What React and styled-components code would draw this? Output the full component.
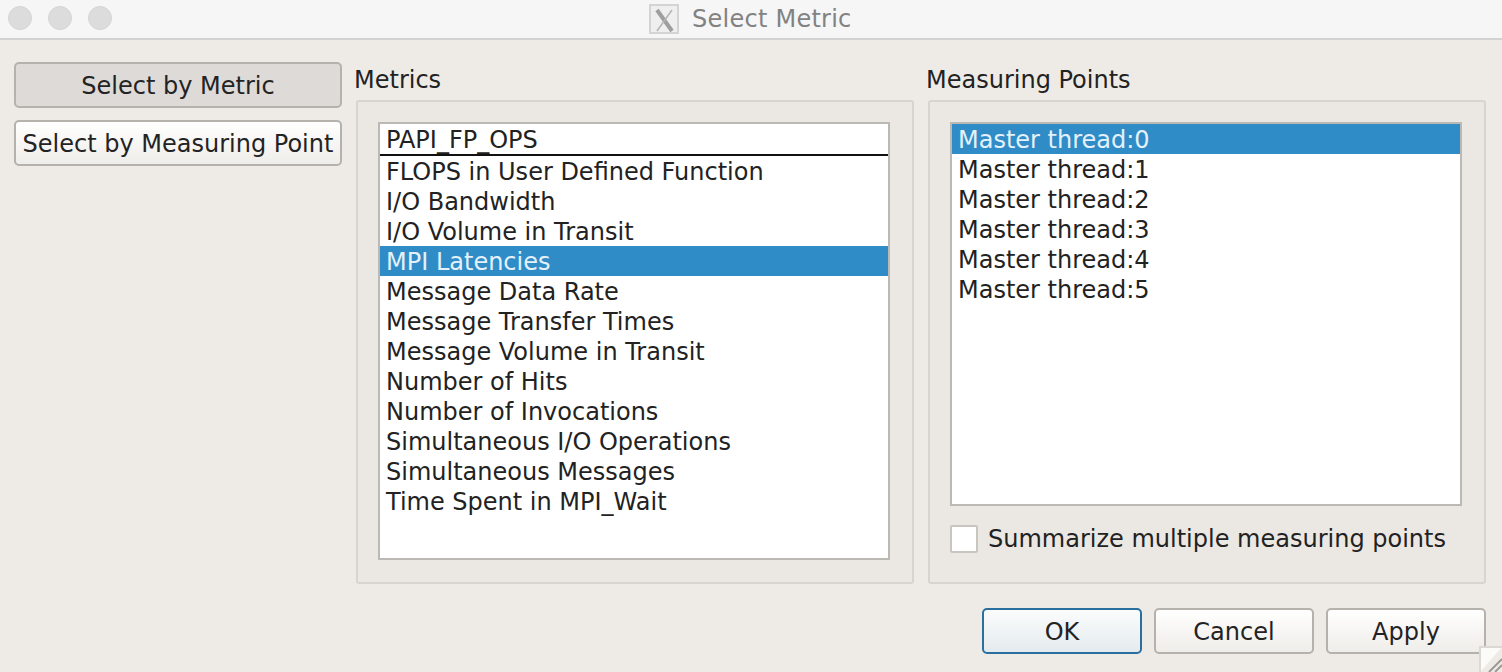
import React from "react";
import styled, { createGlobalStyle } from "styled-components";

const GlobalStyle = createGlobalStyle`
html, body { margin: 0; padding: 0; background: #eeebe7; }
body { font-family: "DejaVu Sans", sans-serif; font-size: 24px; color: #222; overflow: hidden; }
`;

const Window = styled.div`
width: 1502px;
height: 672px;
display: flex;
flex-direction: column;
position: relative;
overflow: hidden;
`;

const TitleBar = styled.div`
height: 38px;
box-sizing: content-box;
flex: none;
display: flex;
align-items: center;
position: relative;
background: #f6f6f6;
border-bottom: 2px solid #d4d2d0;
`;

const Lights = styled.div`
display: flex;
gap: 16px;
padding-left: 8px;
padding-bottom: 2px;
`;

const Light = styled.span`
width: 24px;
height: 24px;
border-radius: 50%;
background: #dcdcdc;
border: 1px solid #d4d4d4;
box-sizing: border-box;
`;

const WindowName = styled.div`
position: absolute;
left: 649px;
top: 3px;
display: flex;
align-items: center;
gap: 13px;
color: #828282;
font-size: 24px;
letter-spacing: 0.25px;
line-height: 32px;
`;

const Body = styled.div`
flex: 1;
display: flex;
flex-direction: column;
padding: 22px 16px 18px 14px;
`;

const Columns = styled.div`
display: flex;
height: 522px;
`;

const Sidebar = styled.div`
width: 328px;
flex: none;
margin-right: 14px;
display: flex;
flex-direction: column;
gap: 12px;
`;

const PushButton = styled.div`
box-sizing: border-box;
height: 46px;
padding-top: 2px;
display: flex;
align-items: center;
justify-content: center;
white-space: nowrap;
border-radius: 5px;
border: 2px solid ${({ $default }) => ($default ? "#2a6f9f" : "#b5b1ac")};
background: ${({ $pressed, $default }) =>
    $pressed
        ? "#dedad7"
        : $default
        ? "linear-gradient(#fbfcfc, #e4ebee)"
        : "linear-gradient(#ffffff, #efedea)"};
color: #232323;
`;

const GroupColumn = styled.div`
width: 558px;
flex: none;
display: flex;
flex-direction: column;
margin-right: ${({ $last }) => ($last ? 0 : "14px")};
`;

const GroupLabel = styled.div`
height: 38px;
line-height: 36px;
margin-left: -2px;
`;

const GroupBox = styled.div`
box-sizing: border-box;
flex: 1;
display: flex;
flex-direction: column;
padding: 20px 22px 20px 20px;
background: #ebe8e4;
border: 2px solid #d8d5d1;
border-radius: 3px;
`;

const ListBox = styled.div`
box-sizing: border-box;
height: ${({ $height }) => $height}px;
flex: none;
background: #fff;
border: 2px solid #bcb9b5;
`;

const HeaderRow = styled.div`
height: 32px;
line-height: 32px;
padding-left: 6px;
box-sizing: border-box;
border-bottom: 2px solid #111;
`;

const Row = styled.div`
height: 30px;
line-height: 32px;
padding-left: 6px;
white-space: nowrap;
background: ${({ $selected }) => ($selected ? "#308cc6" : "transparent")};
color: ${({ $selected }) => ($selected ? "#e4f1fa" : "#222")};
`;

const CheckRow = styled.div`
display: flex;
align-items: center;
gap: 10px;
margin-top: 19px;
`;

const CheckBox = styled.span`
box-sizing: border-box;
width: 28px;
height: 28px;
background: #fff;
border: 2px solid #c9c6c2;
border-radius: 2px;
`;

const Footer = styled.div`
display: flex;
justify-content: flex-end;
gap: 12px;
margin-top: 24px;
`;

const FooterButton = styled(PushButton)`
width: 160px;
`;

const Grip = styled.svg`
position: absolute;
right: 0;
bottom: 0;
`;

const metrics = [
    "FLOPS in User Defined Function",
    "I/O Bandwidth",
    "I/O Volume in Transit",
    "MPI Latencies",
    "Message Data Rate",
    "Message Transfer Times",
    "Message Volume in Transit",
    "Number of Hits",
    "Number of Invocations",
    "Simultaneous I/O Operations",
    "Simultaneous Messages",
    "Time Spent in MPI_Wait",
];

const threads = [0, 1, 2, 3, 4, 5].map((n) => `Master thread:${n}`);

const XIcon = () => (
    <svg width="30" height="30" viewBox="0 0 30 30">
        <rect x="1" y="1" width="28" height="28" fill="#efefef" stroke="#d4d4d4" strokeWidth="2" />
        <path d="M8 6 23 27" stroke="#9e9e9e" strokeWidth="4" fill="none" />
        <path d="M23 6 8 27" stroke="#b4b4b4" strokeWidth="1.5" fill="none" />
    </svg>
);

const App = () => (
    <Window>
        <GlobalStyle />
        <TitleBar>
            <Lights>
                <Light />
                <Light />
                <Light />
            </Lights>
            <WindowName>
                <XIcon />
                <span>Select Metric</span>
            </WindowName>
        </TitleBar>
        <Body>
            <Columns>
                <Sidebar>
                    <PushButton $pressed>Select by Metric</PushButton>
                    <PushButton>Select by Measuring Point</PushButton>
                </Sidebar>
                <GroupColumn>
                    <GroupLabel>Metrics</GroupLabel>
                    <GroupBox>
                        <ListBox $height={438}>
                            <HeaderRow>PAPI_FP_OPS</HeaderRow>
                            {metrics.map((name) => (
                                <Row key={name} $selected={name === "MPI Latencies"}>{name}</Row>
                            ))}
                        </ListBox>
                    </GroupBox>
                </GroupColumn>
                <GroupColumn $last>
                    <GroupLabel>Measuring Points</GroupLabel>
                    <GroupBox>
                        <ListBox $height={384}>
                            {threads.map((name, i) => (
                                <Row key={name} $selected={i === 0}>{name}</Row>
                            ))}
                        </ListBox>
                        <CheckRow>
                            <CheckBox />
                            <span>Summarize multiple measuring points</span>
                        </CheckRow>
                    </GroupBox>
                </GroupColumn>
            </Columns>
            <Footer>
                <FooterButton $default>OK</FooterButton>
                <FooterButton>Cancel</FooterButton>
                <FooterButton>Apply</FooterButton>
            </Footer>
        </Body>
        <Grip width="23" height="26" viewBox="0 0 23 26">
            <path d="M1 26V1H23" fill="#fbfbfa" stroke="#dcd9d5" strokeWidth="2" />
            <path d="M10 26 23 13M16 26 23 19" stroke="#9c9a97" strokeWidth="2" fill="none" />
        </Grip>
    </Window>
);

export default App;
